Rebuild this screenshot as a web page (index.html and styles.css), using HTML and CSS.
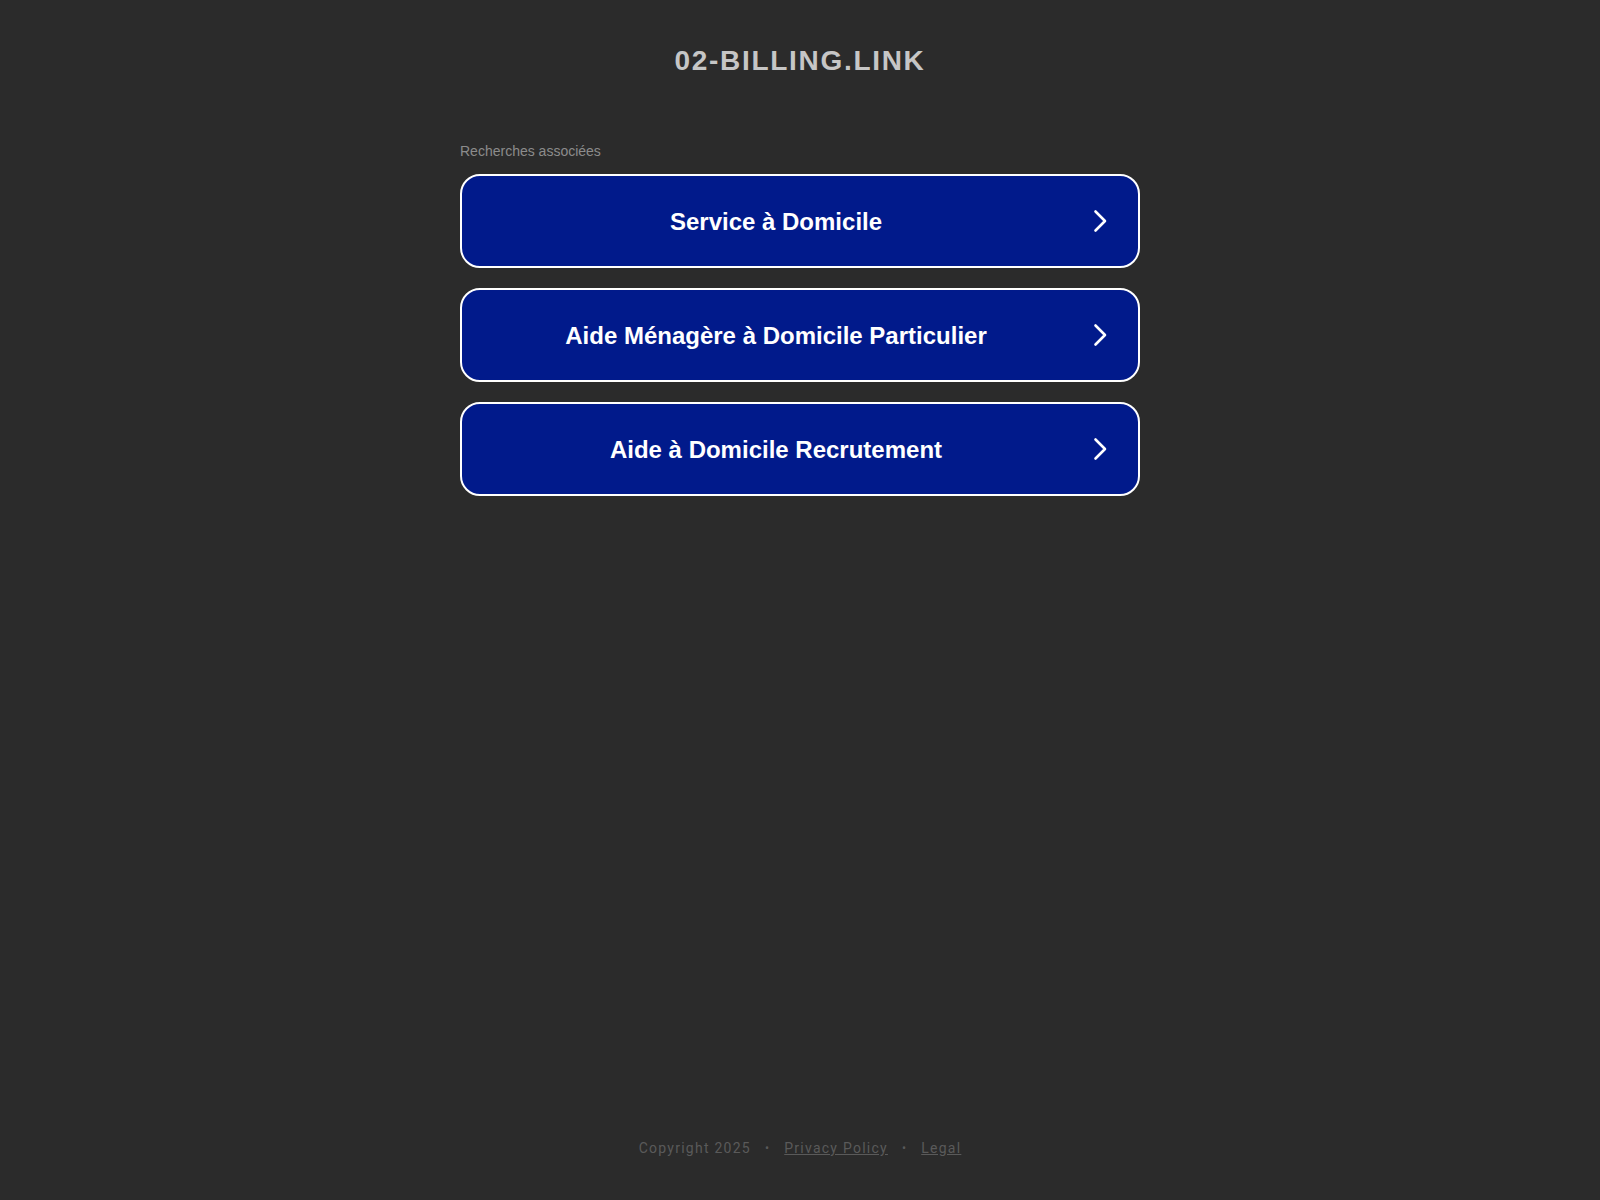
FILE: index.html
```html
<!DOCTYPE html>
<html lang="fr">
<head>
<meta charset="utf-8">
<title>02-billing.link</title>
<link rel="stylesheet" href="styles.css">
</head>
<body>
<div class="page">
  <header class="header">
    <h1 class="domain">02-BILLING.LINK</h1>
  </header>
  <main class="content">
    <p class="related-label">Recherches associées</p>
    <ul class="links">
      <li><a class="link-btn" href="#"><span class="link-text">Service à Domicile</span><svg class="chev" viewBox="0 0 24 24" width="24" height="24"><path d="M7.5 2.5 L17 12 L7.5 21.5" fill="none" stroke="#fff" stroke-width="2.6" stroke-linecap="round" stroke-linejoin="round"/></svg></a></li>
      <li><a class="link-btn" href="#"><span class="link-text">Aide Ménagère à Domicile Particulier</span><svg class="chev" viewBox="0 0 24 24" width="24" height="24"><path d="M7.5 2.5 L17 12 L7.5 21.5" fill="none" stroke="#fff" stroke-width="2.6" stroke-linecap="round" stroke-linejoin="round"/></svg></a></li>
      <li><a class="link-btn" href="#"><span class="link-text">Aide à Domicile Recrutement</span><svg class="chev" viewBox="0 0 24 24" width="24" height="24"><path d="M7.5 2.5 L17 12 L7.5 21.5" fill="none" stroke="#fff" stroke-width="2.6" stroke-linecap="round" stroke-linejoin="round"/></svg></a></li>
    </ul>
  </main>
  <footer class="footer">
    <span>Copyright 2025</span>
    <span class="sep">•</span>
    <a href="#">Privacy Policy</a>
    <span class="sep">•</span>
    <a href="#">Legal</a>
  </footer>
</div>
</body>
</html>
```

FILE: styles.css
```css
html, body {
  margin: 0;
  padding: 0;
  background: #2b2b2b;
}

body {
  font-family: "Liberation Sans", Arial, sans-serif;
}

.page {
  min-height: 100vh;
  display: flex;
  flex-direction: column;
  align-items: center;
}

.header {
  padding-top: 44px;
}

.domain {
  margin: 0;
  font-size: 28px;
  line-height: 34px;
  font-weight: 700;
  letter-spacing: 1.7px;
  color: #c6c6c6;
  text-align: center;
}

.content {
  width: 680px;
  margin-top: 65px;
  flex: 1;
}

.related-label {
  margin: 0 0 15px 0;
  font-size: 14px;
  line-height: 16px;
  color: #8c8c8c;
}

.links {
  list-style: none;
  margin: 0;
  padding: 0;
  display: flex;
  flex-direction: column;
  gap: 20px;
}

.link-btn {
  box-sizing: border-box;
  height: 94px;
  display: flex;
  align-items: center;
  padding: 0 26px 0 28px;
  background: #011a8b;
  border: 2px solid #ffffff;
  border-radius: 20px;
  text-decoration: none;
  color: #ffffff;
}

.link-text {
  flex: 1;
  text-align: center;
  font-size: 24px;
  font-weight: 700;
  line-height: 28px;
  padding-top: 2px;
}

.chev {
  flex: none;
  margin-left: 26px;
  width: 24px;
  height: 24px;
}

.footer {
  padding-bottom: 44px;
  font-family: Roboto, "Liberation Sans", sans-serif;
  font-size: 14px;
  line-height: 16px;
  letter-spacing: 1.25px;
  color: #5a5a5a;
  display: flex;
  align-items: center;
}

.footer a {
  color: #5a5a5a;
  text-decoration: underline;
}

.sep {
  margin: 0 14px;
  font-size: 12px;
}
```
